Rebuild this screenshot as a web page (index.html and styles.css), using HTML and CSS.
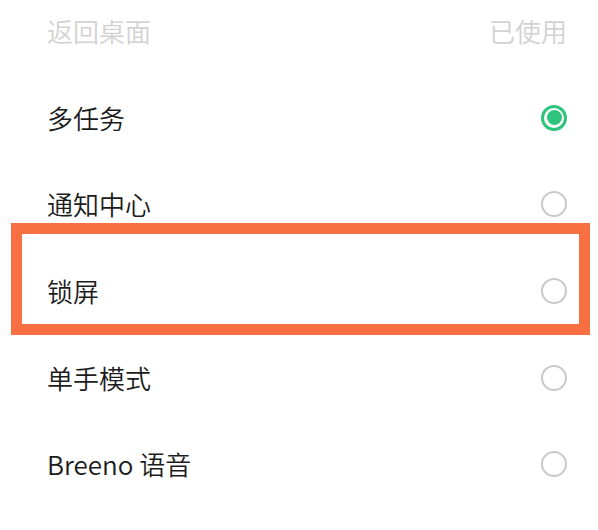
FILE: index.html
```html
<!DOCTYPE html>
<html lang="zh-CN">
<head>
<meta charset="utf-8">
<link rel="stylesheet" href="styles.css">
</head>
<body>
<div class="list">
  <div class="row disabled"><span class="label">返回桌面</span><span class="status">已使用</span></div>
  <div class="row"><span class="label">多任务</span><span class="radio checked"></span></div>
  <div class="row"><span class="label">通知中心</span><span class="radio"></span></div>
  <div class="row"><span class="label">锁屏</span><span class="radio"></span></div>
  <div class="row"><span class="label">单手模式</span><span class="radio"></span></div>
  <div class="row"><span class="label">Breeno 语音</span><span class="radio"></span></div>
  <div class="highlight"></div>
</div>
</body>
</html>
```
FILE: styles.css
```css
html, body {
  margin: 0;
  padding: 0;
  background: #ffffff;
  overflow: hidden;
}
body {
  width: 598px;
  height: 530px;
  font-family: "Noto Sans CJK SC", "Noto Sans", sans-serif;
}
.list {
  position: relative;
  margin-top: -12px;
}
.row {
  height: 86.6px;
  display: flex;
  align-items: center;
  justify-content: space-between;
  padding: 0 31px 0 47px;
  box-sizing: border-box;
}
.label {
  font-size: 26px;
  color: #1c1c1c;
  line-height: 1;
  font-weight: 350;
}
.disabled .label,
.status {
  color: #d2d2d2;
}
.status {
  font-size: 26px;
  line-height: 1;
  font-weight: 350;
}
.radio {
  width: 26px;
  height: 26px;
  box-sizing: border-box;
  border: 2px solid #c9c9c9;
  border-radius: 50%;
  display: flex;
  align-items: center;
  justify-content: center;
}
.radio.checked {
  border: 3px solid #2fc47b;
}
.radio.checked::after {
  content: "";
  width: 15px;
  height: 15px;
  border-radius: 50%;
  background: #2fc47b;
}
.highlight {
  position: absolute;
  left: 11px;
  top: 235px;
  width: 579px;
  height: 112px;
  box-sizing: border-box;
  border: 11px solid #f86f41;
}
```
